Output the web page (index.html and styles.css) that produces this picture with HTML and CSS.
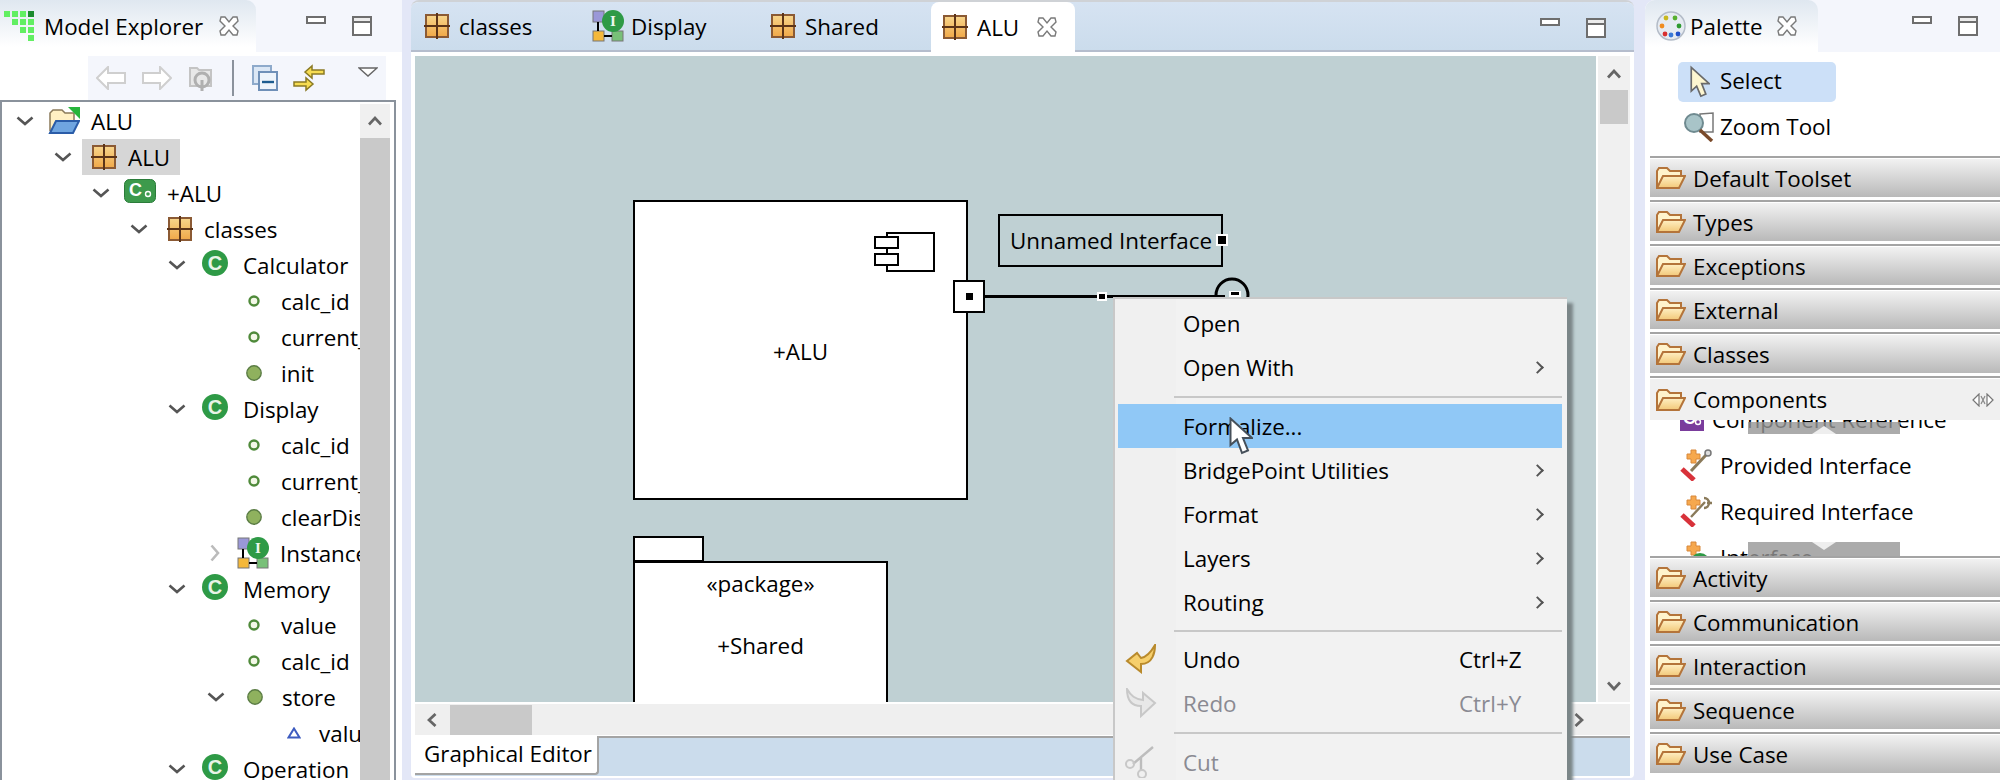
FILE: index.html
```html
<!DOCTYPE html>
<html lang="en">
<head>
<meta charset="utf-8">
<title>BridgePoint</title>
<link rel="stylesheet" href="styles.css">
</head>
<body>
<svg class="defs" width="0" height="0" aria-hidden="true">
  <defs>
    <linearGradient id="gold" x1="0" y1="0" x2="0" y2="1"><stop offset="0" stop-color="#f8d68c"/><stop offset="1" stop-color="#f0a848"/></linearGradient>
    <linearGradient id="fold" x1="0" y1="0" x2="0" y2="1"><stop offset="0" stop-color="#fff0c4"/><stop offset="1" stop-color="#f2c878"/></linearGradient>
    <symbol id="pkg" viewBox="0 0 26 26"><rect x="2" y="2" width="22" height="22" fill="url(#gold)" stroke="#8b5a34" stroke-width="2"/><path d="M13 0V26M0 13H26" stroke="#5c3418" stroke-width="2"/></symbol>
    <symbol id="cls" viewBox="0 0 26 26"><circle cx="13" cy="13" r="13" fill="#2e9a46"/><text x="13" y="20" class="ico-letter">C</text></symbol>
    <symbol id="comp" viewBox="0 0 32 24"><rect x="0.5" y="0.5" width="31" height="23" rx="5" fill="#3d9a4c" stroke="#2b7c3a"/><text x="5" y="17" class="ico-small">C</text><circle cx="24" cy="15" r="2.5" fill="none" stroke="#fff" stroke-width="1.4"/></symbol>
    <symbol id="attr" viewBox="0 0 12 12"><circle cx="6" cy="6" r="4.5" fill="#f4f8e8" stroke="#4f8a3a" stroke-width="2.4"/></symbol>
    <symbol id="op" viewBox="0 0 16 16"><circle cx="8" cy="8" r="7.2" fill="#8fb15e" stroke="#5b7d45" stroke-width="1.4"/></symbol>
    <symbol id="tri" viewBox="0 0 14 12"><path d="M7 1.5L12.5 10.5H1.5Z" fill="#fff" stroke="#3e5cc0" stroke-width="2"/></symbol>
    <symbol id="chev" viewBox="0 0 18 10"><path d="M1.5 1.5L9 8L16.5 1.5" fill="none" stroke="#555" stroke-width="2.6"/></symbol>
    <symbol id="chevr" viewBox="0 0 10 18"><path d="M1.5 1.5L8 9L1.5 16.5" fill="none" stroke="#bbb" stroke-width="2.6"/></symbol>
    <symbol id="close" viewBox="0 0 20 20"><path d="M2 1H6L10 6L14 1H18L19 5L14 10L19 15L18 19H14L10 14L6 19H2L1 15L6 10L1 5Z" fill="#fff" stroke="#7a7a7a" stroke-width="1.4"/></symbol>
    <symbol id="min" viewBox="0 0 20 8"><rect x="1" y="1" width="18" height="6" fill="#fff" stroke="#6e6e6e" stroke-width="2"/></symbol>
    <symbol id="max" viewBox="0 0 20 20"><rect x="1" y="1" width="18" height="18" fill="#fff" stroke="#6e6e6e" stroke-width="2"/><rect x="1" y="1" width="18" height="5" fill="#ececec" stroke="#6e6e6e" stroke-width="2"/></symbol>
    <symbol id="inst" viewBox="0 0 32 32"><rect x="1" y="1" width="11" height="11" fill="#9a98d8" stroke="#777"/><rect x="1" y="21" width="11" height="10" fill="#f4b83a" stroke="#777"/><rect x="20" y="21" width="11" height="10" fill="#78c078" stroke="#777"/><path d="M6 12V21M12 26H20" stroke="#000" stroke-width="2"/><circle cx="21" cy="11" r="11" fill="#2e9a46"/><text x="21" y="16" class="ico-i">I</text></symbol>
    <symbol id="folder" viewBox="0 0 30 24"><path d="M1 22V5L3 2H11L14 5H25V10" fill="#fff3cc" stroke="#b4743a" stroke-width="2"/><path d="M1 22L7 10H29L23 22Z" fill="url(#fold)" stroke="#b4743a" stroke-width="2"/></symbol>
    <symbol id="arrow" viewBox="0 0 30 24"><path d="M1 12L12 1V7H29V17H12V23Z" fill="#fff" stroke="#cfcfcf" stroke-width="2"/></symbol>
    <symbol id="cursor" viewBox="0 0 24 38"><path d="M1.5 1.5V28L8 22.5L13 36L19 33.5L14 21H23Z" fill="#fff" stroke="#46505a" stroke-width="2"/></symbol>
    <symbol id="iface-tool" viewBox="0 0 32 32"><path d="M2 20L14 31" stroke="#d8323a" stroke-width="5"/><path d="M11 22L26 6" stroke="#8a7a5a" stroke-width="3"/><path d="M11 1H16V5H20V10H16V14H11V10H7V5H11Z" fill="#f6a84e" stroke="#d8883a"/><circle cx="28" cy="4" r="3" fill="#ddd" stroke="#777" stroke-width="1.5"/></symbol>
    <symbol id="iface-req" viewBox="0 0 32 32"><path d="M2 20L14 31" stroke="#d8323a" stroke-width="5"/><path d="M11 22L25 7M24 3A5 5 0 0 1 24 13M27 8H32" fill="none" stroke="#8a7a5a" stroke-width="2.4"/><path d="M11 1H16V5H20V10H16V14H11V10H7V5H11Z" fill="#f6a84e" stroke="#d8883a"/></symbol>
  </defs>
</svg>

<div class="app">
  <section class="explorer">
    <header class="view-head">
      <div class="view-tab explorer-tab">
        <svg class="ico-explorer" width="30" height="30" viewBox="0 0 30 30"><g fill="#62ef62"><rect x="0" y="0" width="6" height="6"/><rect x="8" y="0" width="6" height="6"/><rect x="16" y="0" width="6" height="6"/><rect x="8" y="8" width="6" height="6"/><rect x="16" y="8" width="6" height="6"/><rect x="24" y="8" width="6" height="6"/><rect x="16" y="16" width="6" height="6"/><rect x="24" y="16" width="6" height="6"/><rect x="24" y="24" width="6" height="6"/></g><rect x="24" y="0" width="6" height="6" fill="#1c8a2e"/></svg>
        <span>Model Explorer</span>
        <svg class="ico-close" width="20" height="20"><use href="#close"/></svg>
      </div>
      <div class="view-ctl">
        <svg width="20" height="8"><use href="#min"/></svg>
        <svg width="20" height="20"><use href="#max"/></svg>
      </div>
    </header>
    <div class="toolbar">
      <svg width="30" height="24"><use href="#arrow"/></svg>
      <svg class="flip" width="30" height="24"><use href="#arrow"/></svg>
      <svg width="26" height="28" viewBox="0 0 26 28"><path d="M2 4H9L11 6H23V22H2Z" fill="#e8e8e8" stroke="#c4c4c4" stroke-width="2"/><circle cx="14" cy="16" r="7" fill="none" stroke="#b0b0b0" stroke-width="3"/><path d="M14 16V27" stroke="#b0b0b0" stroke-width="3"/></svg>
      <i class="tool-sep"></i>
      <svg width="26" height="26" viewBox="0 0 26 26"><rect x="1" y="1" width="18" height="18" fill="#dbe7f5" stroke="#8eaacb" stroke-width="2"/><rect x="7" y="7" width="18" height="18" fill="#eef4fb" stroke="#6f90b8" stroke-width="2"/><path d="M10 17H22" stroke="#1c5c90" stroke-width="2.4"/></svg>
      <svg class="tool-link" width="32" height="30" viewBox="0 0 32 30"><path d="M12 9L19 3V7H31V11H19V15Z" fill="#f6dc52" stroke="#8a7a24" stroke-width="1.5"/><path d="M20 21L13 15V19H1V23H13V27Z" fill="#f6dc52" stroke="#8a7a24" stroke-width="1.5"/></svg>
      <svg class="tool-menu" width="20" height="10" viewBox="0 0 20 10"><path d="M1 1H19L10 9Z" fill="#fff" stroke="#666" stroke-width="1.5"/></svg>
    </div>
    <div class="tree-box">
      <div class="tree">
        <div class="row"><svg class="tw" style="margin-left:14px" width="18" height="10"><use href="#chev"/></svg><svg class="ri" width="32" height="28" viewBox="0 0 32 28"><path d="M2 24V6L5 3H14L17 6H26V14" fill="#fff0c4" stroke="#8a7a5a" stroke-width="1.5"/><path d="M2 26L8 14H31L25 26Z" fill="#6fa5e0" stroke="#2a5ca8" stroke-width="2"/><path d="M20 0H32V12Z" fill="#27b53c"/></svg><span class="lbl">ALU</span></div>
        <div class="row"><svg class="tw" style="margin-left:52px" width="18" height="10"><use href="#chev"/></svg><div class="sel"><svg width="26" height="26"><use href="#pkg"/></svg><span>ALU</span></div></div>
        <div class="row"><svg class="tw" style="margin-left:90px" width="18" height="10"><use href="#chev"/></svg><svg class="ri up" width="32" height="24"><use href="#comp"/></svg><span class="lbl">+ALU</span></div>
        <div class="row"><svg class="tw" style="margin-left:128px" width="18" height="10"><use href="#chev"/></svg><svg class="ri pk" width="26" height="26"><use href="#pkg"/></svg><span class="lbl">classes</span></div>
        <div class="row rc"><svg class="tw" style="margin-left:166px" width="18" height="10"><use href="#chev"/></svg><svg class="ri up" width="26" height="26"><use href="#cls"/></svg><span class="lbl">Calculator</span></div>
        <div class="row leaf"><svg width="12" height="12"><use href="#attr"/></svg><span>calc_id</span></div>
        <div class="row leaf"><svg width="12" height="12"><use href="#attr"/></svg><span>current_value</span></div>
        <div class="row leaf"><svg class="big" width="16" height="16"><use href="#op"/></svg><span>init</span></div>
        <div class="row rc"><svg class="tw" style="margin-left:166px" width="18" height="10"><use href="#chev"/></svg><svg class="ri up" width="26" height="26"><use href="#cls"/></svg><span class="lbl">Display</span></div>
        <div class="row leaf"><svg width="12" height="12"><use href="#attr"/></svg><span>calc_id</span></div>
        <div class="row leaf"><svg width="12" height="12"><use href="#attr"/></svg><span>current_value</span></div>
        <div class="row leaf"><svg class="big" width="16" height="16"><use href="#op"/></svg><span>clearDisplay</span></div>
        <div class="row"><svg class="tw tw-r" width="10" height="18"><use href="#chevr"/></svg><svg class="ri sm" width="32" height="32"><use href="#inst"/></svg><span class="lbl">Instance State Machine</span></div>
        <div class="row rc"><svg class="tw" style="margin-left:166px" width="18" height="10"><use href="#chev"/></svg><svg class="ri up" width="26" height="26"><use href="#cls"/></svg><span class="lbl">Memory</span></div>
        <div class="row leaf"><svg width="12" height="12"><use href="#attr"/></svg><span>value</span></div>
        <div class="row leaf"><svg width="12" height="12"><use href="#attr"/></svg><span>calc_id</span></div>
        <div class="row leaf sub"><svg class="tw" width="18" height="10"><use href="#chev"/></svg><svg class="big" width="16" height="16"><use href="#op"/></svg><span>store</span></div>
        <div class="row param"><svg width="14" height="12"><use href="#tri"/></svg><span>value</span></div>
        <div class="row rc"><svg class="tw" style="margin-left:166px" width="18" height="10"><use href="#chev"/></svg><svg class="ri up" width="26" height="26"><use href="#cls"/></svg><span class="lbl">Operation</span></div>
      </div>
      <div class="tree-scroll">
        <div class="scroll-btn"><svg width="14" height="10" viewBox="0 0 14 10"><path d="M1 8.5L7 2L13 8.5" fill="none" stroke="#666" stroke-width="2.6"/></svg></div>
        <div class="scroll-thumb"></div>
      </div>
    </div>
  </section>

  <section class="editor">
    <header class="editor-head">
      <div class="etab"><svg width="26" height="26"><use href="#pkg"/></svg><span>classes</span></div>
      <div class="etab"><svg class="tab-inst" width="32" height="32"><use href="#inst"/></svg><span>Display</span></div>
      <div class="etab"><svg width="26" height="26"><use href="#pkg"/></svg><span>Shared</span></div>
      <div class="etab etab-on"><svg width="26" height="26"><use href="#pkg"/></svg><span>ALU</span><svg class="ico-close" width="20" height="20"><use href="#close"/></svg></div>
      <div class="view-ctl editor-ctl">
        <svg width="20" height="8"><use href="#min"/></svg>
        <svg width="20" height="20"><use href="#max"/></svg>
      </div>
    </header>
    <div class="editor-body">
      <div class="canvas">
        <div class="node comp-box">
          <svg class="comp-ico" width="62" height="41" viewBox="0 0 62 41"><path d="M13 1H60V39H13Z" fill="#fff" stroke="#000" stroke-width="2"/><rect x="1" y="5" width="23" height="11" fill="#fff" stroke="#000" stroke-width="2"/><rect x="1" y="22" width="23" height="11" fill="#fff" stroke="#000" stroke-width="2"/></svg>
          <span>+ALU</span>
        </div>
        <div class="node port"><i></i></div>
        <div class="node wire"></div>
        <div class="node wire-handle"></div>
        <div class="node iface-label">Unnamed Interface<i></i></div>
        <svg class="node socket" width="36" height="36" viewBox="0 0 36 36"><circle cx="18" cy="18" r="16" fill="none" stroke="#000" stroke-width="3"/><rect x="15" y="14" width="12" height="6" fill="#fff"/><rect x="17" y="15" width="8" height="3" fill="#000"/></svg>
        <div class="node pkg-tab"></div>
        <div class="node pkg-body"><span>«package»</span><span>+Shared</span></div>
      </div>
      <div class="vscroll">
        <svg width="14" height="10" viewBox="0 0 14 10"><path d="M1 8.5L7 2L13 8.5" fill="none" stroke="#666" stroke-width="2.8"/></svg>
        <div class="vthumb"></div>
        <svg class="v-down" width="14" height="10" viewBox="0 0 14 10"><path d="M1 1.5L7 8L13 1.5" fill="none" stroke="#666" stroke-width="2.8"/></svg>
      </div>
      <div class="hscroll">
        <svg class="h-left" width="10" height="14" viewBox="0 0 10 14"><path d="M8.5 1L2 7L8.5 13" fill="none" stroke="#666" stroke-width="2.8"/></svg>
        <div class="hthumb"></div>
        <svg class="h-right" width="10" height="14" viewBox="0 0 10 14"><path d="M1.5 1L8 7L1.5 13" fill="none" stroke="#666" stroke-width="2.8"/></svg>
      </div>
      <div class="page-strip"><div class="page-tab">Graphical Editor</div></div>
    </div>
  </section>

  <section class="palette">
    <header class="view-head">
      <div class="view-tab palette-tab">
        <svg width="30" height="30" viewBox="0 0 30 30"><circle cx="15" cy="15" r="14" fill="#e6ebf2" stroke="#b4bcc8" stroke-width="1.5"/><circle cx="10" cy="7" r="2.4" fill="#c8b820"/><circle cx="19" cy="7" r="2.4" fill="#58b030"/><circle cx="6" cy="15" r="2.4" fill="#f08c20"/><circle cx="23" cy="15" r="2.4" fill="#2e9a30"/><circle cx="9" cy="23" r="2.4" fill="#d83030"/><circle cx="15" cy="24" r="2.4" fill="#3878d8"/><circle cx="22" cy="23" r="2.4" fill="#2050c8"/></svg>
        <span>Palette</span>
        <svg class="ico-close" width="20" height="20"><use href="#close"/></svg>
      </div>
      <div class="view-ctl">
        <svg width="20" height="8"><use href="#min"/></svg>
        <svg width="20" height="20"><use href="#max"/></svg>
      </div>
    </header>
    <div class="tools">
      <div class="tool tool-on"><svg width="20" height="36" viewBox="0 0 24 38"><path d="M1.5 1.5V30L8 24L13 36L19 33.5L14 21H23Z" fill="#fdf6d0" stroke="#6a6a6a" stroke-width="2"/></svg><span>Select</span></div>
      <div class="tool"><svg class="tool-zoom" width="30" height="30" viewBox="0 0 30 30"><path d="M16 2L29 1V20L16 20Z" fill="#fff" stroke="#777" stroke-width="1.5"/><circle cx="10" cy="11" r="9" fill="#a8c4c8" stroke="#6f8a90" stroke-width="2"/><path d="M16 18L28 29" stroke="#7a4a2a" stroke-width="3.5"/></svg><span>Zoom Tool</span></div>
    </div>
    <div class="drawer"><div class="bar"><svg width="30" height="24"><use href="#folder"/></svg><span>Default Toolset</span></div></div>
    <div class="drawer"><div class="bar"><svg width="30" height="24"><use href="#folder"/></svg><span>Types</span></div></div>
    <div class="drawer"><div class="bar"><svg width="30" height="24"><use href="#folder"/></svg><span>Exceptions</span></div></div>
    <div class="drawer"><div class="bar"><svg width="30" height="24"><use href="#folder"/></svg><span>External</span></div></div>
    <div class="drawer"><div class="bar"><svg width="30" height="24"><use href="#folder"/></svg><span>Classes</span></div></div>
    <div class="drawer drawer-open"><div class="bar bar-open"><svg width="30" height="24"><use href="#folder"/></svg><span>Components</span><svg class="resize" width="22" height="14" viewBox="0 0 22 14"><path d="M1 7L7 1V13ZM21 7L15 1V13Z" fill="#fff" stroke="#777" stroke-width="1.2"/><path d="M9 3L13 11M13 3L9 11" stroke="#888" stroke-width="1.2"/></svg></div></div>
    <div class="drawer-body">
      <div class="items">
        <div class="item"><svg width="24" height="24" viewBox="0 0 24 24"><rect width="24" height="24" fill="#7a3c9c"/><text x="3" y="17" class="ico-small">C</text><circle cx="18" cy="15" r="2.5" fill="none" stroke="#fff" stroke-width="1.4"/></svg><span>Component Reference</span></div>
        <div class="item"><svg class="item-ico" width="32" height="32"><use href="#iface-tool"/></svg><span>Provided Interface</span></div>
        <div class="item"><svg class="item-ico" width="32" height="32"><use href="#iface-req"/></svg><span>Required Interface</span></div>
        <div class="item"><svg class="item-ico" width="32" height="32" viewBox="0 0 32 32"><path d="M11 1H16V5H20V10H16V14H11V10H7V5H11Z" fill="#f6a84e" stroke="#d8883a"/><circle cx="20" cy="22" r="10" fill="#2e9a46"/></svg><span>Interface</span></div>
      </div>
      <div class="overscroll over-top"><svg width="24" height="8" viewBox="0 0 24 8"><path d="M12 0L24 8H0Z" fill="#eee"/></svg></div>
      <div class="overscroll over-bot"><svg width="24" height="8" viewBox="0 0 24 8"><path d="M12 8L24 0H0Z" fill="#eee"/></svg></div>
    </div>
    <div class="drawer"><div class="bar"><svg width="30" height="24"><use href="#folder"/></svg><span>Activity</span></div></div>
    <div class="drawer"><div class="bar"><svg width="30" height="24"><use href="#folder"/></svg><span>Communication</span></div></div>
    <div class="drawer"><div class="bar"><svg width="30" height="24"><use href="#folder"/></svg><span>Interaction</span></div></div>
    <div class="drawer"><div class="bar"><svg width="30" height="24"><use href="#folder"/></svg><span>Sequence</span></div></div>
    <div class="drawer"><div class="bar"><svg width="30" height="24"><use href="#folder"/></svg><span>Use Case</span></div></div>
  </section>

  <nav class="menu">
    <div class="mi"><span class="m-ico"></span><span class="m-label">Open</span></div>
    <div class="mi"><span class="m-ico"></span><span class="m-label">Open With</span><i class="m-more"></i></div>
    <div class="m-sep"></div>
    <div class="mi mi-on"><span class="m-ico"></span><span class="m-label">Formalize...</span></div>
    <div class="mi"><span class="m-ico"></span><span class="m-label">BridgePoint Utilities</span><i class="m-more"></i></div>
    <div class="mi"><span class="m-ico"></span><span class="m-label">Format</span><i class="m-more"></i></div>
    <div class="mi"><span class="m-ico"></span><span class="m-label">Layers</span><i class="m-more"></i></div>
    <div class="mi"><span class="m-ico"></span><span class="m-label">Routing</span><i class="m-more"></i></div>
    <div class="m-sep m-sep-tight"></div>
    <div class="mi"><span class="m-ico"><svg width="32" height="30" viewBox="0 0 32 30"><path d="M30 1C30 8 28 20 16 20V28L2 17L12 9L16 14C22 13 26 8 30 1Z" fill="#f6cf6c" stroke="#b98a2c" stroke-width="2"/></svg></span><span class="m-label">Undo</span><span class="m-key">Ctrl+Z</span></div>
    <div class="mi mi-off"><span class="m-ico"><svg width="32" height="30" viewBox="0 0 32 30"><path d="M2 1C2 8 4 18 16 18V28L30 15L18 5V12C10 11 6 8 2 1Z" fill="#e8e8e8" stroke="#c8c8c8" stroke-width="2"/></svg></span><span class="m-label">Redo</span><span class="m-key">Ctrl+Y</span></div>
    <div class="m-sep"></div>
    <div class="mi mi-off"><span class="m-ico"><svg width="30" height="32" viewBox="0 0 30 32"><path d="M28 1L8 18M16 12L16 24" fill="none" stroke="#bdbdbd" stroke-width="2.4"/><circle cx="5" cy="18" r="4" fill="none" stroke="#c8c8c8" stroke-width="2"/><circle cx="17" cy="28" r="4" fill="none" stroke="#c8c8c8" stroke-width="2"/></svg></span><span class="m-label">Cut</span></div>
  </nav>
  <svg class="pointer" width="24" height="38"><use href="#cursor"/></svg>
</div>
</body>
</html>
```
FILE: styles.css
```css
* { box-sizing: border-box; }
html, body { margin: 0; padding: 0; }
body { font-family: "Open Sans", "Noto Sans", sans-serif; font-size: 22.4px; color: #000; background: #e3e7f7; }
svg { display: block; flex: none; }
.defs { position: absolute; }
.ico-letter { font: 700 20px "Liberation Sans", sans-serif; fill: #e8f4e8; text-anchor: middle; }
.ico-small { font: 700 18px "Liberation Sans", sans-serif; fill: #fff; }
.ico-i { font: 700 15px "Liberation Serif", serif; fill: #eef8ee; text-anchor: middle; }

.app { position: relative; display: flex; width: 2000px; height: 780px; overflow: hidden; background: #e3e7f7; }

/* view headers */
.view-head { display: flex; height: 52px; background: #f4f6fc; }
.view-tab { display: flex; align-items: center; height: 52px; background: linear-gradient(#dfe7f0, #ffffff 90%); border-top-right-radius: 10px; white-space: nowrap; }
.view-ctl { display: flex; align-items: flex-start; gap: 26px; margin-left: auto; padding-top: 16px; }
.ico-close { margin-left: 20px; }

/* explorer */
.explorer { display: flex; flex-direction: column; width: 402px; margin-right: 9px; background: #fff; border-top-right-radius: 10px; }
.explorer-tab { width: 256px; padding-left: 4px; }
.ico-explorer { margin: 0 10px 0 0; }
.explorer-tab .ico-close { margin-left: 16px; }
.explorer .view-ctl { padding-right: 30px; }
.toolbar { display: flex; align-items: center; height: 44px; margin: 4px 16px 0 88px; padding: 0 8px 0 8px; background: #f4f6fc; gap: 16px; }
.flip { transform: scaleX(-1); }
.tool-sep { width: 2px; height: 36px; background: #8b929c; margin: 0 2px; }
.tool-link { margin-left: -1px; }
.tool-menu { margin: -12px 0 0 17px; }
.tree-box { flex: 1; display: flex; min-height: 0; width: 396px; border: 2px solid #8a929c; border-bottom: 0; overflow: hidden; }
.tree { width: 358px; padding-top: 1px; flex: none; overflow: hidden; background: #fff; }
.row { display: flex; align-items: center; height: 36px; white-space: nowrap; overflow: hidden; }
.tw-r { margin-left: 208px; }
.ri { margin-left: 14px; }
.row .up { margin-top: -5px; }
.ri.pk { margin-left: 19px; }
.ri.sm { margin-left: 17px; }
.lbl { margin-left: 11px; }
.rc .ri { margin-left: 16px; }
.rc .lbl { margin-left: 15px; }
.sel { display: flex; align-items: center; gap: 11px; width: 98px; height: 36px; margin-left: 10px; padding-left: 9px; background: #d6d6d6; }
.leaf { padding-left: 244px; }
.leaf span { margin-left: 21px; }
.leaf svg { margin-left: 2px; }
.leaf .big { margin-left: 0; margin-right: -2px; }
.sub { padding-left: 205px; }
.sub .tw { margin: 0 22px 0 0; }
.param { padding-left: 285px; }
.param span { margin-left: 18px; }
.tree-scroll { width: 30px; flex: none; display: flex; flex-direction: column; }
.scroll-btn { height: 34px; margin-top: 2px; background: #f0f0f0; display: flex; align-items: center; justify-content: center; }
.scroll-thumb { flex: 1; background: #c9c9c9; }

/* editor */
.editor { display: flex; flex-direction: column; width: 1223px; height: 778px; margin-right: 11px; background: #fff; border-top: 2px solid #cfd2d6; border-radius: 8px 8px 4px 4px; overflow: hidden; }
.editor-head { display: flex; height: 50px; background: linear-gradient(#d6e3f2, #cbdcec); border-bottom: 2px solid #b5bdcd; }
.etab { display: flex; align-items: center; gap: 9px; width: 174px; padding-left: 13px; }
.etab:first-child { width: 168px; }
.etab:nth-child(2) { width: 178px; gap: 7px; }
.etab-on { width: 144px; height: 50px; padding-left: 11px; background: #fff; border-radius: 8px 8px 0 0; }
.etab-on .ico-close { margin-left: 9px; }
.editor-ctl { padding-right: 28px; }
.editor-body { display: grid; grid-template-columns: 1181px 32px; grid-template-rows: 646px 31px 40px; column-gap: 2px; row-gap: 2px; padding: 4px 4px 0 4px; }
.canvas { position: relative; background: #bfd0d3; overflow: hidden; }
.node { position: absolute; }
.comp-box { left: 218px; top: 144px; width: 335px; height: 300px; display: flex; align-items: center; justify-content: center; background: #fff; border: 2px solid #000; padding-top: 2px; }
.comp-ico { position: absolute; right: 30px; top: 30px; }
.port { left: 538px; top: 224px; width: 32px; height: 33px; background: #fff; border: 2px solid #000; display: flex; align-items: center; justify-content: center; }
.port i { width: 7px; height: 7px; background: #000; }
.wire { left: 570px; top: 239px; width: 240px; height: 3px; background: #000; }
.wire-handle { left: 684px; top: 238px; width: 6px; height: 5px; background: #000; outline: 2px solid #fff; }
.iface-label { left: 583px; top: 158px; width: 225px; height: 53px; display: flex; align-items: center; padding-left: 10px; border: 2px solid #000; white-space: nowrap; }
.iface-label i { position: absolute; right: -7px; top: 18px; width: 12px; height: 12px; background: #000; border: 2px solid #fff; }
.socket { left: 799px; top: 221px; }
.pkg-tab { left: 218px; top: 480px; width: 71px; height: 26px; background: #fff; border: 2px solid #000; }
.pkg-body { left: 218px; top: 505px; width: 255px; height: 150px; display: flex; flex-direction: column; align-items: center; gap: 31px; padding-top: 5px; background: #fff; border: 2px solid #000; }
.vscroll { position: relative; display: flex; flex-direction: column; align-items: center; padding-top: 13px; background: #f0f0f0; }
.vthumb { width: 28px; height: 34px; margin-top: 11px; background: #c9c9c9; }
.v-down { margin-top: auto; margin-bottom: 11px; }
.hscroll { grid-column: 1 / -1; display: flex; align-items: center; padding-left: 12px; background: #efefef; }
.hthumb { width: 82px; height: 30px; margin-left: 13px; background: #c9c9c9; }
.h-right { margin-left: auto; margin-right: 46px; }
.page-strip { grid-column: 1 / -1; margin-top: -1px; height: 40px; background: #cbdcec; border-top: 2px solid #a4a4a4; }
.page-tab { width: 184px; height: 39px; margin-top: -2px; padding: 0 0 0 9px; background: #fff; border-right: 2px solid #a4a4a4; border-bottom: 2px solid #a4a4a4; border-bottom-right-radius: 4px; white-space: nowrap; line-height: 36px; }

/* palette */
.palette { display: flex; flex-direction: column; width: 355px; height: 780px; background: #fff; border-top-left-radius: 10px; overflow: hidden; }
.palette-tab { width: 173px; padding-left: 11px; }
.palette-tab span { margin-left: 4px; }
.palette-tab .ico-close { margin-left: 14px; }
.palette .view-ctl { padding-right: 22px; }
.tools { height: 104px; padding: 10px 0 0 33px; }
.tool { display: flex; align-items: center; gap: 10px; width: 158px; height: 40px; padding-left: 12px; white-space: nowrap; }
.tool + .tool { margin-top: 5px; height: 40px; }
.tool-on { background: #cce0f8; border-radius: 5px; }
.tool-on span { margin-top: -4px; }
.tool-zoom { margin: 0 -4px 0 -6px; }
.tool:last-child { gap: 10px; width: 200px; }
.tool:last-child span { margin-top: -2px; }
.drawer { flex: none; height: 44px; margin-left: 5px; padding: 1px 0 3px; border-top: 2px solid #a4a4a4; background: #fff; }
.bar { display: flex; align-items: center; gap: 7px; height: 38px; padding-left: 6px; background: linear-gradient(#f2f2f2, #b9b9b9); }
.drawer-open { padding-bottom: 0; border-top-color: #a4a4a4; position: relative; z-index: 1; }
.bar-open { height: 41px; background: #f0f0f0; }
.resize { margin-left: auto; margin-right: 6px; }
.drawer-body { position: relative; flex: none; height: 136px; margin-left: 5px; overflow: hidden; }
.items { margin-top: -24px; }
.item { display: flex; align-items: center; gap: 6px; height: 46px; padding-left: 23px; white-space: nowrap; }
.item > svg:first-child { margin-left: 7px; margin-right: 2px; }
.item .item-ico { margin-left: 0; margin-right: -2px; }
.overscroll { position: absolute; left: 98px; width: 152px; height: 12px; background: rgba(150, 150, 150, .8); display: flex; justify-content: center; }
.over-top { top: 2px; align-items: flex-end; }
.over-bot { bottom: 0; height: 14px; align-items: flex-start; }

/* context menu */
.menu { position: absolute; left: 1113px; top: 297px; width: 454px; height: 500px; padding: 2px 3px 0; background: linear-gradient(90deg, #f0f0f0 61px, #f2f2f2 61px); border: 2px solid #c8c8c8; border-width: 2px 0 0 2px; box-shadow: 6px 6px 3px #7b8688; }
.mi { display: flex; align-items: center; width: 444px; height: 44px; }
.mi-on { background: #90c8f6; }
.mi-off { color: #8a8a92; }
.m-ico { display: flex; align-items: center; width: 65px; height: 44px; padding-left: 7px; flex: none; }
.m-label { flex: 1; white-space: nowrap; }
.m-key { width: 103px; }
.m-more { width: 9px; height: 9px; margin-right: 20px; border-top: 2px solid #555; border-right: 2px solid #555; transform: rotate(45deg); }
.m-sep { height: 15px; margin-left: 56px; width: 388px; position: relative; background: linear-gradient(#c8c8c8, #c8c8c8) center / 100% 2px no-repeat; }
.m-sep-tight { height: 13px; }
.pointer { position: absolute; left: 1229px; top: 417px; }
```
